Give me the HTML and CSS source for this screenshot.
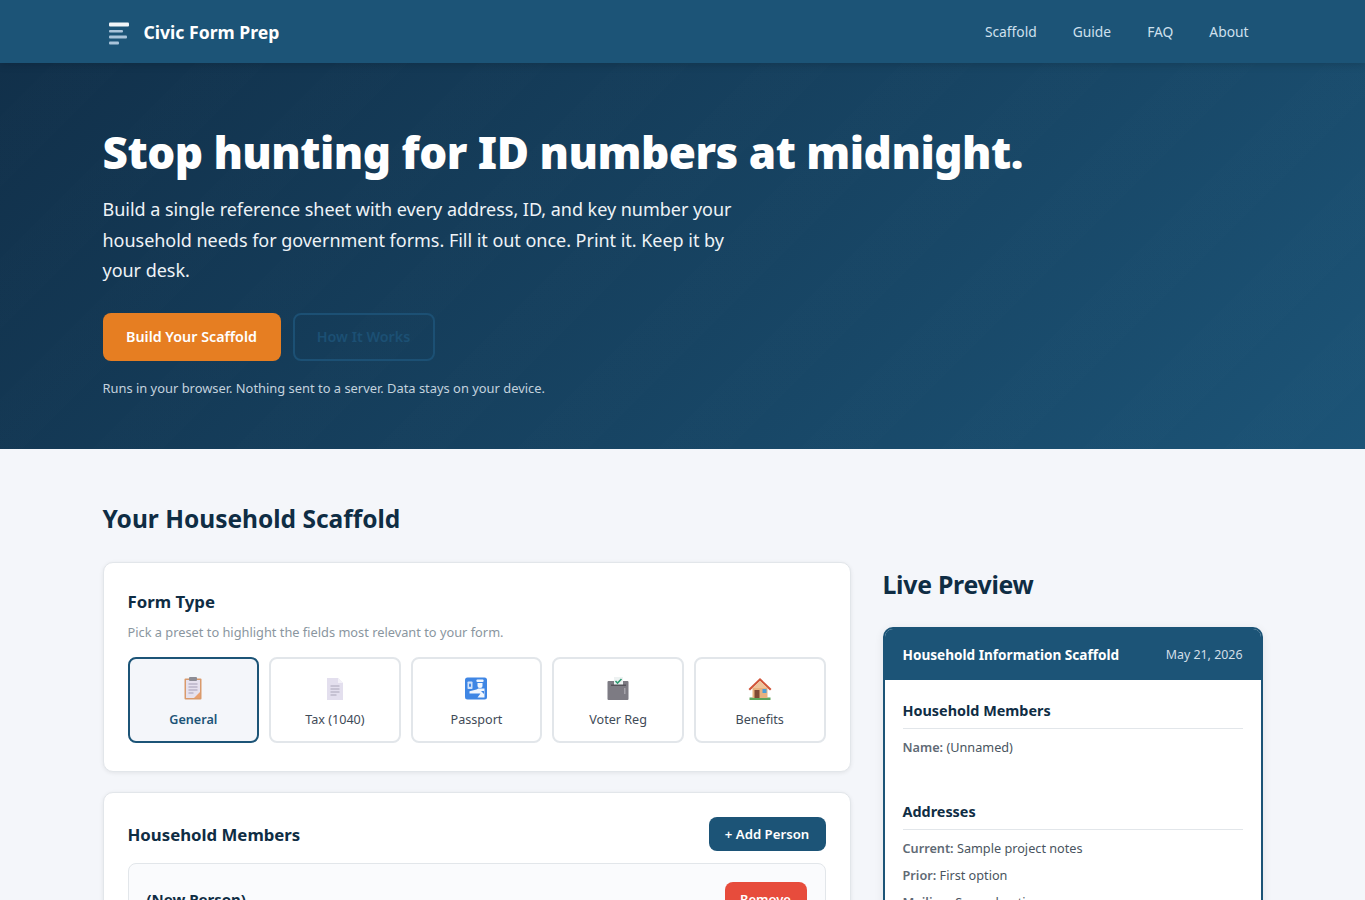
FILE: index.html
```html
<!DOCTYPE html>
<html lang="en">
<head>
<meta charset="utf-8">
<title>Civic Form Prep</title>
<link rel="stylesheet" href="styles.css">
</head>
<body>
<header class="nav">
  <div class="nav-inner">
    <a class="brand" href="#">
      <svg class="brand-icon" width="24" height="26" viewBox="0 0 24 26"><rect x="2" y="3.500" width="20" height="4" rx="1" fill="#f1f5f8"/><rect x="2" y="11" width="14" height="2.500" rx="1" fill="#a9c4da"/><rect x="2" y="16.500" width="18" height="3" rx="1" fill="#a9c4da"/><rect x="2" y="22.500" width="10" height="3" rx="1" fill="#a9c4da"/></svg>
      <span>Civic Form Prep</span>
    </a>
    <nav class="nav-links"><a href="#">Scaffold</a><a href="#">Guide</a><a href="#">FAQ</a><a href="#">About</a></nav>
  </div>
</header>
<section class="hero">
  <div class="container">
    <h1>Stop hunting for ID numbers at midnight.</h1>
    <p class="lead">Build a single reference sheet with every address, ID, and key number your household needs for government forms. Fill it out once. Print it. Keep it by your desk.</p>
    <div class="cta"><a class="btn-primary" href="#">Build Your Scaffold</a><a class="btn-ghost" href="#">How It Works</a></div>
    <p class="note">Runs in your browser. Nothing sent to a server. Data stays on your device.</p>
  </div>
</section>
<main class="container main">
  <h2 class="section-title">Your Household Scaffold</h2>
  <div class="layout">
    <div class="col-left">
      <section class="card">
        <h3>Form Type</h3>
        <p class="hint">Pick a preset to highlight the fields most relevant to your form.</p>
        <div class="presets">
          <button class="preset active">
            <svg class="pi" viewBox="0 0 24 24"><rect x="3.500" y="2.500" width="17" height="21" rx="1" fill="#d99a6c"/><rect x="5" y="4" width="14" height="18" fill="#e6e1ee"/><path d="M13 22l6-6v6z" fill="#e9a06f"/><rect x="8" y="1" width="8" height="4" rx="1" fill="#8d8d96"/><path d="M7.500 8h9M7.500 11h9M7.500 14h9M7.500 17h5" stroke="#a49db5" stroke-width="1"/></svg>
            <span>General</span>
          </button>
          <button class="preset">
            <svg class="pi" viewBox="0 0 24 24"><path d="M4 2h11l5 5v17H4z" fill="#e3dfee"/><path d="M15 2l5 5h-5z" fill="#f3f1f8"/><path d="M7.500 10h9M7.500 13h9M7.500 16h9M7.500 19h6" stroke="#a9a5b8" stroke-width="1"/></svg>
            <span>Tax (1040)</span>
          </button>
          <button class="preset">
            <svg class="pi" viewBox="0 0 24 24"><rect x="1" y="1.500" width="22" height="22" rx="2.500" fill="#3f86e4"/><rect x="3.500" y="5.500" width="5" height="7.500" rx="0.800" fill="#cfe1fa"/><rect x="5" y="7.500" width="2" height="3.500" rx="1" fill="#3f86e4"/><rect x="12.500" y="3.500" width="7" height="2.500" rx="0.800" fill="#f2f7fe"/><path d="M13.500 7h5v2.500a2.500 2.500 0 0 1-5 0z" fill="#f2f7fe"/><path d="M20.500 12.500v9h-7l3-4h-11v-2.200l7-1.800 1.800-1z" fill="#f2f7fe"/><path d="M17 15l3 3v-3z" fill="#3f86e4"/></svg>
            <span>Passport</span>
          </button>
          <button class="preset">
            <svg class="pi" viewBox="0 0 24 24"><rect x="1.500" y="5" width="21" height="19" rx="1" fill="#7d7b83"/><path d="M8 1h9v8H8z" fill="#eef2f2"/><path d="M9.500 5l2 2 4-4" fill="none" stroke="#2e9b72" stroke-width="1.600"/><rect x="5" y="8.500" width="15" height="1.500" fill="#55535a"/><rect x="18" y="12" width="1.500" height="6" fill="#a5a3aa"/></svg>
            <span>Voter Reg</span>
          </button>
          <button class="preset">
            <svg class="pi" viewBox="0 0 24 24"><rect x="1.500" y="21.500" width="21" height="2.500" fill="#5ea65b"/><path d="M4.500 11h15v11h-15z" fill="#e8b17f"/><path d="M12 2L0.500 13 2 14.500 12 5l10 9.500 1.500-1.500z" fill="#d1553a"/><path d="M12 5L4.500 12h15z" fill="#eec49b"/><rect x="6.500" y="14" width="5" height="8" fill="#7f4a35"/><rect x="14.500" y="13" width="4" height="4" fill="#4d9fd8"/></svg>
            <span>Benefits</span>
          </button>
        </div>
      </section>
      <section class="card">
        <div class="card-head"><h3 class="h-members">Household Members</h3><button class="btn-add">+ Add Person</button></div>
        <div class="person">
          <div class="person-head"><strong>(New Person)</strong><button class="btn-remove">Remove</button></div>
          <div class="filler"></div>
        </div>
      </section>
    </div>
    <aside class="col-right">
      <h2 class="preview-title">Live Preview</h2>
      <div class="sheet">
        <div class="sheet-head"><strong>Household Information Scaffold</strong><span>May 21, 2026</span></div>
        <div class="sheet-body">
          <section class="sheet-section">
            <h4>Household Members</h4>
            <p><b>Name:</b> (Unnamed)</p>
          </section>
          <section class="sheet-section">
            <h4>Addresses</h4>
            <p><b>Current:</b> Sample project notes</p>
            <p><b>Prior:</b> First option</p>
            <p><b>Mailing:</b> Second option</p>
          </section>
        </div>
      </div>
    </aside>
  </div>
</main>
</body>
</html>
```
FILE: styles.css
```css
* { box-sizing: border-box; }
html, body { margin: 0; padding: 0; }
body { font-family: "Noto Sans", "Open Sans", sans-serif; background: #f4f6fa; color: #0f2d44; font-size: 16px; }
a { text-decoration: none; color: inherit; }
button { font-family: inherit; cursor: pointer; }
.nav { background: #1c5477; height: 63px; box-shadow: 0 2px 8px rgba(0,0,0,.15); position: relative; z-index: 2; }
.nav-inner { width: 1160px; margin: 0 auto; height: 63px; display: flex; justify-content: space-between; align-items: center; }
.brand { display: flex; align-items: center; gap: 13px; color: #fff; font-weight: 700; font-size: 17.600px; padding-left: 4px; }
.brand-icon { display: block; }
.nav-links { display: flex; gap: 36px; padding-right: 14px; color: #cfe0ee; font-size: 13.800px; }
.hero { height: 386px; background: repeating-linear-gradient(-45deg, rgba(255,255,255,0) 0 50px, rgba(255,255,255,.005) 50px 100px), linear-gradient(135deg, #11304a 0%, #1c5477 100%); color: #fff; padding-top: 59px; }
.container { width: 1160px; margin: 0 auto; }
h1 { margin: 0; font-size: 44px; line-height: 60px; font-weight: 900; letter-spacing: -0.5px; }
.lead { margin: 12px 0 0; width: 640px; font-size: 18px; letter-spacing: -0.03px; line-height: 30.600px; color: #eef3f7; }
.cta { display: flex; gap: 12px; margin-top: 27px; }
.btn-primary { width: 178px; height: 48px; display: flex; align-items: center; justify-content: center; background: #e67e22; border-radius: 8px; color: #fff; font-weight: 600; font-size: 14.300px; }
.btn-ghost { width: 142px; height: 48px; display: flex; align-items: center; justify-content: center; border: 2px solid #1c5074; border-radius: 8px; color: #1c5074; font-weight: 600; font-size: 14.300px; }
.note { margin: 18px 0 0; font-size: 12.900px; line-height: 18px; color: #c3d2de; }
.main { padding-top: 52px; }
.section-title { margin: 0 0 25px; font-size: 24.500px; line-height: 36px; font-weight: 700; }
.layout { display: grid; grid-template-columns: 748px 380px; gap: 32px; align-items: start; }
.col-left { display: flex; flex-direction: column; gap: 20px; }
.card { background: #fff; border: 1px solid #e2e6ea; border-radius: 10px; padding: 24px; box-shadow: 0 1px 4px rgba(0,0,0,.08); }
.card h3 { margin: 0; font-size: 16.800px; line-height: 29px; font-weight: 700; }
.hint { margin: 6px 0 0; font-size: 12.800px; line-height: 20px; color: #8a96a0; }
.presets { display: grid; grid-template-columns: repeat(5, 1fr); gap: 10px; margin: 15px 0 4px; }
.preset { height: 86px; background: #fff; border: 2px solid #e2e6ea; border-radius: 8px; display: flex; flex-direction: column; align-items: center; justify-content: center; gap: 11px; font-size: 12.600px; color: #3f4b57; padding: 3px 0 0; }
.preset.active { background: #f4f6fa; border-color: #1c5477; color: #1c5477; font-weight: 600; }
.pi { width: 24px; height: 24px; display: block; }
.card-head { display: flex; justify-content: space-between; align-items: center; }
.btn-add { width: 117px; height: 34px; background: #1c5477; color: #fff; border: 0; border-radius: 8px; font-size: 13.200px; font-weight: 600; padding: 0; }
.person { margin-top: 12px; background: #fafbfd; border: 1px solid #e2e6ea; border-radius: 8px; padding: 18px; }
.person-head { display: flex; justify-content: space-between; align-items: center; font-size: 15px; }
.btn-remove { width: 82px; height: 34px; background: #e74c3c; color: #fff; border: 0; border-radius: 8px; font-size: 13px; font-weight: 600; padding: 0; }
.filler { height: 300px; }
.preview-title { margin: 4px 0 25px; font-size: 24.800px; line-height: 36px; font-weight: 700; letter-spacing: -0.25px; }
.sheet { background: #fff; border: 2px solid #1c5477; border-radius: 10px; box-shadow: 0 2px 10px rgba(0,0,0,.08); overflow: hidden; }
.sheet-head { height: 51px; background: #1c5477; color: #fff; display: flex; justify-content: space-between; align-items: center; padding: 0 18px; font-size: 13.600px; }
.sheet-head span { font-size: 12.400px; color: #d3dfe8; }
.sheet-body { padding: 19px 18px 18px; }
.sheet-section { margin-bottom: 43px; }
.sheet-section h4 { margin: 0 0 8px; font-size: 14.400px; line-height: 24px; padding-bottom: 5px; border-bottom: 1px solid #e2e6ea; font-weight: 700; }
.sheet-section p { margin: 0 0 7px; font-size: 12.700px; line-height: 20px; color: #4a5560; }
.sheet-section b { font-weight: 600; color: #5f6a75; }
```
